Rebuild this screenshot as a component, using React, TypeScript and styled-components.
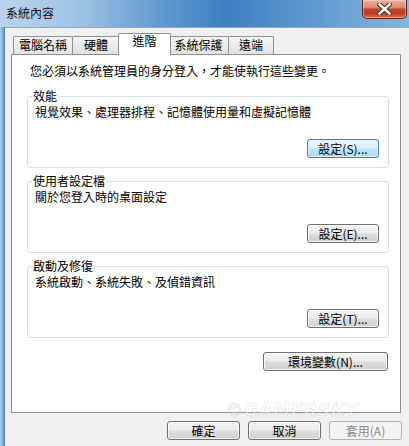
import React from "react";
import styled, { createGlobalStyle } from "styled-components";

const Global = createGlobalStyle`
  html, body { margin: 0; padding: 0; background: #f0f0f0; }
  body { font-family: "Noto Sans CJK TC", "Noto Sans", sans-serif; font-size: 12px; color: #000; }
  * { box-sizing: border-box; }
`;

const Window = styled.div`
  position: relative;
  width: 409px;
  height: 446px;
  display: flex;
  flex-direction: column;
  overflow: hidden;
`;

const TitleBar = styled.div`
  height: 27px;
  flex: none;
  display: flex;
  justify-content: space-between;
  align-items: flex-start;
  padding: 0 2px 0 6px;
  background: linear-gradient(90deg, #b9d3ec 0%, #a2c5e6 18%, #5f98cf 40%, #3f80c2 55%, #5d97cf 75%, #86b5df 100%);
`;

const Title = styled.span`
  margin-top: 6px;
  font-size: 12px;
  line-height: 14px;
  color: #111;
`;

const CloseButton = styled.div`
  width: 45px;
  height: 19px;
  display: flex;
  align-items: center;
  justify-content: center;
  border: 1px solid #5a2a22;
  border-top: none;
  border-radius: 0 0 5px 5px;
  background: linear-gradient(180deg, #eab3a2 0%, #d98a72 42%, #c24a2e 50%, #b83b22 72%, #d86e50 100%);
  box-shadow: inset 0 0 0 1px rgba(255, 220, 210, 0.45);
`;

const Body = styled.div`
  flex: 1;
  display: flex;
`;

const LeftFrame = styled.div`
  width: 4px;
  flex: none;
  background: linear-gradient(90deg, #a9d0ef 0%, #7db6e2 60%, #5f9ad0 100%);
`;

const Client = styled.div`
  flex: 1;
  display: flex;
  flex-direction: column;
  background: #f0f0f0;
  border-left: 1px solid #5f7f9c;
  border-top: 1px solid #8ea9c2;
  padding: 5px 7px 6px 6px;
`;

const TabStrip = styled.div`
  display: flex;
  align-items: flex-end;
  height: 21px;
  padding-left: 2px;
`;

const Tab = styled.div<{ $w: number; $active?: boolean }>`
  width: ${(p) => p.$w}px;
  flex: none;
  text-align: center;
  font-size: 12px;
  border: 1px solid #8e9196;
  border-bottom: none;
  border-radius: 2px 2px 0 0;
  margin-left: -1px;
  &:first-child { margin-left: 0; }
  ${(p) =>
    p.$active
      ? `
    position: relative;
    z-index: 2;
    height: 22px;
    margin: 0 -2px -1px -2px;
    line-height: 14px;
    background: #ffffff;
  `
      : `
    height: 18px;
    line-height: 16px;
    background: linear-gradient(180deg, #f6f6f6 0%, #ececec 50%, #e2e2e2 100%);
  `}
`;

const Panel = styled.div`
  width: 390px;
  height: 359px;
  flex: none;
  background: #fff;
  border: 1px solid #8e9196;
  padding: 9px 11px 0 15px;
  display: flex;
  flex-direction: column;
`;

const Notice = styled.div`
  margin-left: 3px;
  line-height: 14px;
  margin-bottom: 11px;
`;

const Group = styled.fieldset`
  margin: 0 0 6px 0;
  min-inline-size: 0;
  border: 1px solid #d5dfe5;
  border-radius: 3px;
  padding: 0 9px 9px 4px;
  display: flex;
  flex-direction: column;
`;

const Legend = styled.legend`
  padding: 0 1px;
  margin: 0;
  font-size: 12px;
  line-height: 14px;
`;

const Description = styled.div<{ $top?: number }>`
  margin: ${(p) => p.$top ?? 2}px 0 0 3px;
  line-height: 14px;
`;

const ButtonRow = styled.div<{ $top: number; $right?: number; $gap?: number }>`
  display: flex;
  justify-content: flex-end;
  gap: ${(p) => p.$gap ?? 0}px;
  margin-top: ${(p) => p.$top}px;
  margin-right: ${(p) => p.$right ?? 0}px;
`;

const Button = styled.button<{ $w: number; $variant?: "default" | "disabled" }>`
  width: ${(p) => p.$w}px;
  height: 19px;
  padding: 0;
  font-family: "Noto Sans CJK TC", "Noto Sans", sans-serif;
  font-size: 12px;
  line-height: 17px;
  color: #000;
  border: 1px solid #707070;
  border-radius: 3px;
  background: linear-gradient(180deg, #f3f3f3 0%, #ebebeb 48%, #dddddd 52%, #cfcfcf 100%);
  box-shadow: inset 0 0 0 1px rgba(255, 255, 255, 0.75);
  ${(p) =>
    p.$variant === "default"
      ? `
    border-color: #3c7fb1;
    background: linear-gradient(180deg, #eaf6fd 0%, #d9f0fc 48%, #bee6fd 52%, #a7d9f5 100%);
    box-shadow: inset 0 0 0 1px rgba(220, 245, 255, 0.9);
  `
      : ""}
  ${(p) =>
    p.$variant === "disabled"
      ? `
    border-color: #adb2b5;
    background: #f4f4f4;
    color: #8a8a8a;
    box-shadow: none;
  `
      : ""}
`;

const Watermark = styled.span`
  position: absolute;
  left: 226px;
  top: 401px;
  font-family: "DejaVu Sans", sans-serif;
  font-weight: bold;
  font-style: italic;
  font-size: 17px;
  line-height: 18px;
  letter-spacing: 1px;
  color: rgba(255, 255, 255, 0.35);
  -webkit-text-stroke: 0.7px rgba(160, 160, 160, 0.3);
  pointer-events: none;
`;

const CloseIcon = () => (
  <svg width="15" height="12" viewBox="0 0 15 12">
    <path d="M2.5 1.5 L12.5 10.5 M12.5 1.5 L2.5 10.5" stroke="#5a2418" strokeWidth="4.6" strokeLinecap="square" />
    <path d="M2.5 1.5 L12.5 10.5 M12.5 1.5 L2.5 10.5" stroke="#ffffff" strokeWidth="2.6" strokeLinecap="square" />
  </svg>
);

export default function App() {
  return (
    <>
      <Global />
      <Window>
        <TitleBar>
          <Title>系統內容</Title>
          <CloseButton>
            <CloseIcon />
          </CloseButton>
        </TitleBar>
        <Body>
          <LeftFrame />
          <Client>
            <TabStrip>
              <Tab $w={60}>電腦名稱</Tab>
              <Tab $w={48}>硬體</Tab>
              <Tab $w={53} $active>進階</Tab>
              <Tab $w={61}>系統保護</Tab>
              <Tab $w={46}>遠端</Tab>
            </TabStrip>
            <Panel>
              <Notice>您必須以系統管理員的身分登入，才能使執行這些變更。</Notice>
              <Group>
                <Legend>效能</Legend>
                <Description>視覺效果、處理器排程、記憶體使用量和虛擬記憶體</Description>
                <ButtonRow $top={20}>
                  <Button $w={72} $variant="default">設定(S)...</Button>
                </ButtonRow>
              </Group>
              <Group>
                <Legend>使用者設定檔</Legend>
                <Description>關於您登入時的桌面設定</Description>
                <ButtonRow $top={20}>
                  <Button $w={72}>設定(E)...</Button>
                </ButtonRow>
              </Group>
              <Group>
                <Legend>啟動及修復</Legend>
                <Description>系統啟動、系統失敗、及偵錯資訊</Description>
                <ButtonRow $top={20}>
                  <Button $w={72}>設定(T)...</Button>
                </ButtonRow>
              </Group>
              <ButtonRow $top={8} $right={1}>
                <Button $w={125}>環境變數(N)...</Button>
              </ButtonRow>
            </Panel>
            <ButtonRow $top={8} $gap={8}>
              <Button $w={73}>確定</Button>
              <Button $w={73}>取消</Button>
              <Button $w={73} $variant="disabled">套用(A)</Button>
            </ButtonRow>
          </Client>
        </Body>
        <Watermark>©GAMERSKY</Watermark>
      </Window>
    </>
  );
}
